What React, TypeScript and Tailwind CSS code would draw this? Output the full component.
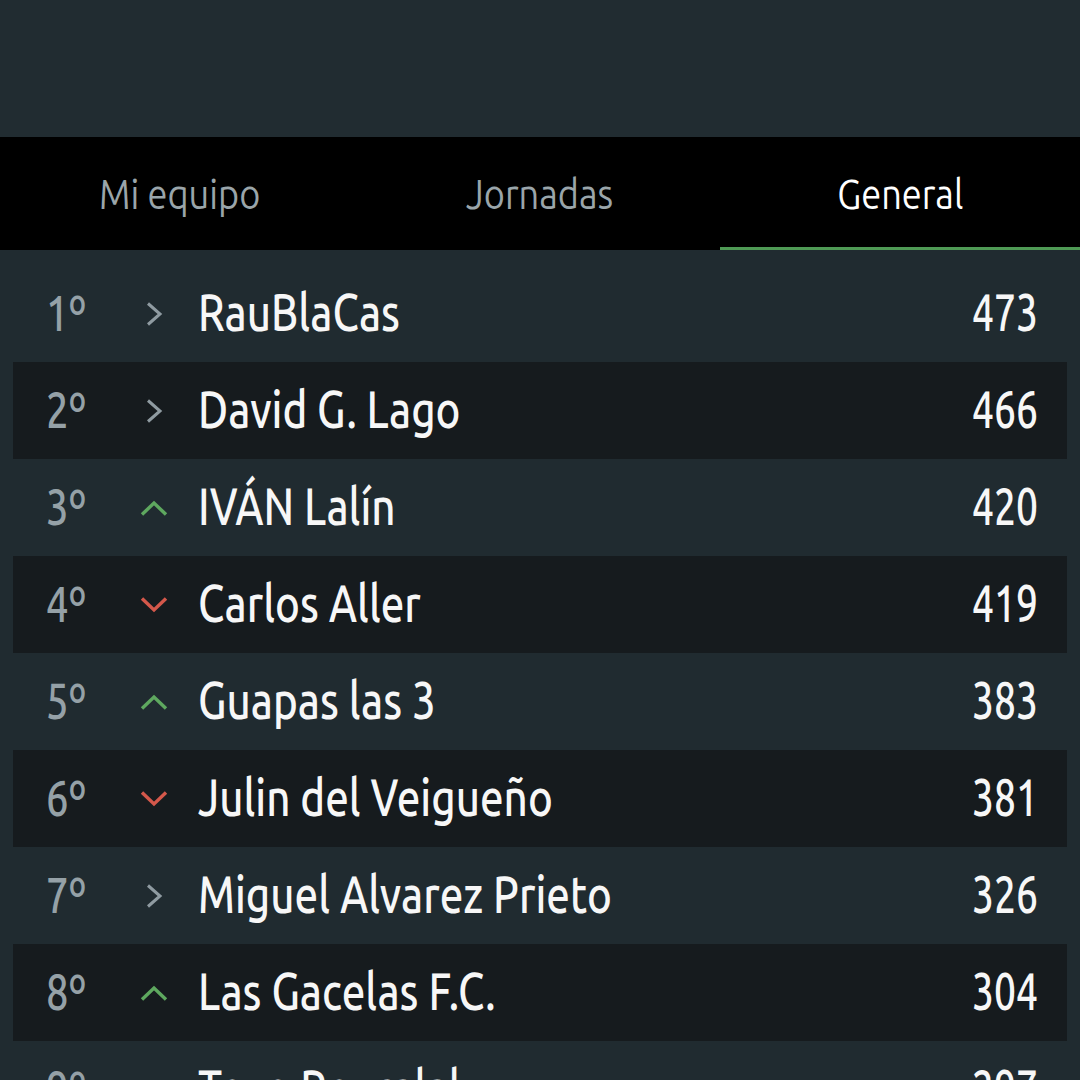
import React from "react";

type Trend = "same" | "up" | "down";
const rows: { pos: number; name: string; pts: number; trend: Trend }[] = [
  { pos: 1, name: "RauBlaCas", pts: 473, trend: "same" },
  { pos: 2, name: "David G. Lago", pts: 466, trend: "same" },
  { pos: 3, name: "IVÁN Lalín", pts: 420, trend: "up" },
  { pos: 4, name: "Carlos Aller", pts: 419, trend: "down" },
  { pos: 5, name: "Guapas las 3", pts: 383, trend: "up" },
  { pos: 6, name: "Julin del Veigueño", pts: 381, trend: "down" },
  { pos: 7, name: "Miguel Alvarez Prieto", pts: 326, trend: "same" },
  { pos: 8, name: "Las Gacelas F.C.", pts: 304, trend: "up" },
  { pos: 9, name: "Toxo Rouralal", pts: 297, trend: "down" },
];

function TrendIcon({ t }: { t: Trend }) {
  if (t === "same")
    return (
      <svg width="18" height="26" viewBox="0 0 18 26">
        <path d="M3 2.5 L15 13 L3 23.5" fill="none" stroke="#8f9ba1" strokeWidth="3" />
      </svg>
    );
  if (t === "up")
    return (
      <svg width="30" height="18" viewBox="0 0 30 18">
        <path d="M3 15.5 L15 4 L27 15.5" fill="none" stroke="#5ea85f" strokeWidth="3.4" />
      </svg>
    );
  return (
    <svg width="30" height="18" viewBox="0 0 30 18">
      <path d="M3 2.5 L15 14 L27 2.5" fill="none" stroke="#d4584b" strokeWidth="3.4" />
    </svg>
  );
}

export default function App() {
  const font = { fontFamily: '"Ubuntu", "Roboto", sans-serif' };
  return (
    <div className="w-[1080px] h-[1080px] overflow-hidden bg-[#202b30]" style={font}>
      <div className="h-[137px] bg-[#212c31]" />
      <div className="h-[113px] bg-black flex">
        <div className="flex-1 flex items-center justify-center text-[42px] text-[#9aa5aa]">
          <span className="inline-block scale-x-[0.86]">Mi equipo</span>
        </div>
        <div className="flex-1 flex items-center justify-center text-[42px] text-[#9aa5aa]">
          <span className="inline-block scale-x-[0.86]">Jornadas</span>
        </div>
        <div className="flex-1 flex items-center justify-center text-[42px] text-white relative">
          <span className="inline-block scale-x-[0.86]">General</span>
          <div className="absolute left-0 right-0 bottom-0 h-[3px] bg-[#4f9a55]" />
        </div>
      </div>
      <div className="px-[13px] pt-[15px]">
        {rows.map((r, i) => (
          <div
            key={r.pos}
            className={`h-[97px] flex items-center pl-[33px] pr-[29px] ${i % 2 === 1 ? "bg-[#161b1e]" : ""}`}
          >
            <div className="w-[80px] text-[50px] font-medium text-[#95a1a7] leading-none -mt-[3px]">
              <span className="inline-block origin-left scale-x-[0.8]">{r.pos}º</span>
            </div>
            <div className="w-[56px] flex justify-center">
              <TrendIcon t={r.trend} />
            </div>
            <div className="flex-1 ml-[16px] text-[52px] font-medium text-[#f7f7f7] leading-none whitespace-nowrap -mt-[3px]">
              <span className="inline-block origin-left scale-x-[0.81]">{r.name}</span>
            </div>
            <div className="text-[52px] font-medium text-[#f7f7f7] leading-none -mt-[3px]">
              <span className="inline-block origin-right scale-x-[0.75]">{r.pts}</span>
            </div>
          </div>
        ))}
      </div>
    </div>
  );
}
